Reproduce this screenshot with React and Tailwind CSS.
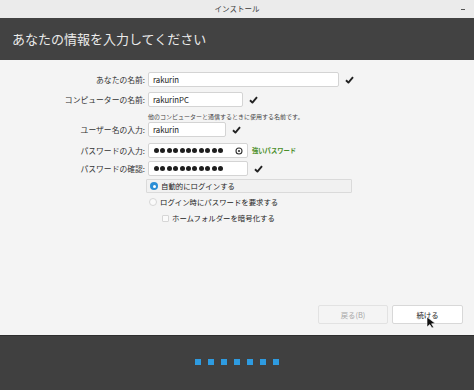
import React from 'react';

const jp = { fontFamily: '"Noto Sans CJK JP", "Noto Sans", sans-serif' };

function Check() {
  return (
    <svg width="9" height="8" viewBox="0 0 9 8" className="shrink-0">
      <path d="M1 4.3 L3.4 6.6 L8 1.2" fill="none" stroke="#222" strokeWidth="1.9" strokeLinejoin="round" />
    </svg>
  );
}

function Dots() {
  return (
    <div className="flex items-center gap-[1.4px]">
      {Array.from({ length: 11 }).map((_, i) => (
        <span key={i} className="block w-[5px] h-[5px] rounded-full bg-[#1e1e1e]" />
      ))}
    </div>
  );
}

function Row({ label, children, className = '' }) {
  return (
    <div className={`flex items-center ${className}`}>
      <div className="w-[146px] text-right text-[7.8px] text-[#333] pr-[1px] leading-none">{label}</div>
      <div className="flex items-center gap-[6px] ml-[2px]">{children}</div>
    </div>
  );
}

export default function App() {
  return (
    <div className="w-[474px] h-[390px] flex flex-col bg-[#f4f4f4] relative overflow-hidden" style={jp}>
      <div className="h-[18px] bg-[#ebebeb] flex items-center justify-center relative">
        <span className="text-[7.5px] text-[#3c3c3c]">インストール</span>
        <span className="absolute right-[9px] top-[9px] w-[4px] h-[1px] bg-[#555]" />
      </div>

      <div className="h-[42px] bg-[#424242] flex items-center pl-[12px]">
        <h1 className="text-[13px] text-[#ebebeb]">あなたの情報を入力してください</h1>
      </div>

      <div className="flex-1 flex flex-col pt-[12px] relative">
        <Row label="あなたの名前:">
          <div className="w-[191px] h-[15px] bg-white border border-[#d4d4d4] rounded-[2px] flex items-center px-[4px] text-[7.8px] text-[#222]">rakurin</div>
          <Check />
        </Row>
        <Row label="コンピューターの名前:" className="mt-[5px]">
          <div className="w-[95px] h-[15px] bg-white border border-[#d4d4d4] rounded-[2px] flex items-center px-[4px] text-[7.8px] text-[#222]">rakurinPC</div>
          <Check />
        </Row>
        <div className="pl-[148px] mt-[3px] h-[12px] flex items-center text-[6px] text-[#444]">他のコンピューターと通信するときに使用する名前です。</div>
        <Row label="ユーザー名の入力:">
          <div className="w-[78px] h-[15px] bg-white border border-[#d4d4d4] rounded-[2px] flex items-center px-[4px] text-[7.8px] text-[#222]">rakurin</div>
          <Check />
        </Row>
        <Row label="パスワードの入力:" className="mt-[6px]">
          <div className="w-[100px] h-[15px] bg-white border border-[#d4d4d4] rounded-[2px] flex items-center pl-[5px] pr-[4px] justify-between">
            <Dots />
            <svg width="8" height="8" viewBox="0 0 8 8">
              <circle cx="4" cy="4" r="3" fill="none" stroke="#333" strokeWidth="1.1" />
              <circle cx="4" cy="4" r="1.1" fill="#333" />
            </svg>
          </div>
          <span className="text-[6.3px] font-bold text-[#4a8f2a] -ml-[2px]">強いパスワード</span>
        </Row>
        <Row label="パスワードの確認:" className="mt-[3px]">
          <div className="w-[100px] h-[15px] bg-white border border-[#d4d4d4] rounded-[2px] flex items-center pl-[5px]">
            <Dots />
          </div>
          <Check />
        </Row>

        <div className="ml-[146px] mt-[3px] w-[206px] h-[14px] bg-[#f1f1f1] border border-[#dadada] rounded-[1px] flex items-center pl-[3px] gap-[3px]">
          <span className="w-[8px] h-[8px] rounded-full bg-[#2a8ed6] flex items-center justify-center">
            <span className="w-[3px] h-[3px] rounded-full bg-white" />
          </span>
          <span className="text-[7.4px] text-[#222]">自動的にログインする</span>
        </div>
        <div className="ml-[149px] mt-[2px] h-[14px] flex items-center gap-[3px]">
          <span className="w-[8px] h-[8px] rounded-full bg-[#fafafa] border border-[#d6d6d6]" />
          <span className="text-[7.4px] text-[#222]">ログイン時にパスワードを要求する</span>
        </div>
        <div className="ml-[162px] mt-[2px] h-[14px] flex items-center gap-[3px]">
          <span className="w-[7px] h-[7px] rounded-[1px] bg-[#fafafa] border border-[#d6d6d6]" />
          <span className="text-[7.4px] text-[#222]">ホームフォルダーを暗号化する</span>
        </div>

        <div className="flex-1" />
        <div className="flex justify-end gap-[4px] pr-[11px] pb-[11px]">
          <button className="w-[70px] h-[19px] bg-[#f4f4f4] border border-[#e2e2e2] rounded-[2px] text-[7.4px] text-[#a6a6a6]">戻る(B)</button>
          <button className="w-[71px] h-[19px] bg-white border border-[#d8d8d8] rounded-[2px] text-[7.4px] text-[#222]">続ける</button>
        </div>
        <svg className="absolute left-[426px] top-[256px]" width="12" height="13" viewBox="0 0 12 13">
          <path d="M1 1 L1 11 L3.8 8.6 L6 12 L7.6 11.2 L5.6 7.8 L9.4 7.6 Z" fill="#111" stroke="#fff" strokeWidth="0.6" />
        </svg>
      </div>

      <div className="h-[55px] bg-[#404040] border-t border-[#2e2e2e] flex items-center justify-center gap-[7px] pb-[2px]">
        {Array.from({ length: 7 }).map((_, i) => (
          <span key={i} className="block w-[6px] h-[6px] bg-[#2e9be0]" />
        ))}
      </div>
    </div>
  );
}
